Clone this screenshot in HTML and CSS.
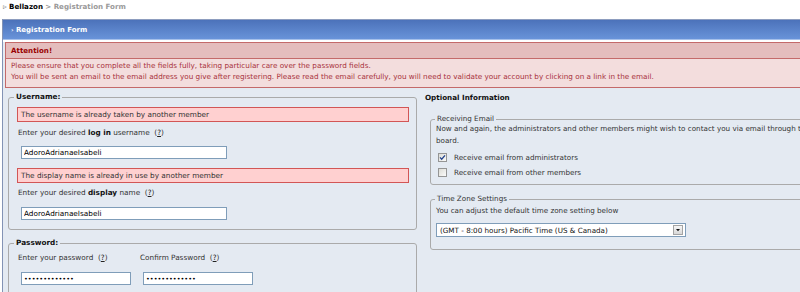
FILE: index.html
```html
<!DOCTYPE html>
<html lang="en">
<head>
  <meta charset="UTF-8" />
  <title>Registration Form</title>
  <link rel="stylesheet" href="styles.css">
</head>
<body>
  <div class="navstrip">
    <span class="nav-arrow">&#9657;</span>
    <b class="nav-home">Bellazon</b>
    <b class="nav-here">&gt; Registration Form</b>
  </div>

  <div class="borderwrap">
    <div class="maintitle"><span class="title-arrow">&rsaquo;</span> Registration Form</div>

    <div class="attention">
      <h4>Attention!</h4>
      <p>Please ensure that you complete all the fields fully, taking particular care over the password fields.<br>You will be sent an email to the email address you give after registering. Please read the email carefully, you will need to validate your account by clicking on a link in the email.</p>
    </div>

    <div class="cols">
      <div class="col-left">
        <fieldset class="box">
          <legend>Username:</legend>
          <div class="error">The username is already taken by another member</div>
          <label class="field-label">Enter your desired <b>log in</b> username&nbsp; (<a href="#">?</a>)</label>
          <input type="text" class="field" value="AdoroAdrianaeIsabeli">
          <div class="error error-next">The display name is already in use by another member</div>
          <label class="field-label label-next">Enter your desired <b>display</b> name&nbsp; (<a href="#">?</a>)</label>
          <input type="text" class="field" value="AdoroAdrianaeIsabeli">
        </fieldset>

        <fieldset class="box box-next">
          <legend>Password:</legend>
          <div class="pw-row">
            <div class="pw-col">
              <label class="field-label pw-label">Enter your password&nbsp; (<a href="#">?</a>)</label>
              <input type="password" class="field pw-field" value="abcdefghijklm">
            </div>
            <div class="pw-col">
              <label class="field-label pw-label">Confirm Password&nbsp; (<a href="#">?</a>)</label>
              <input type="password" class="field pw-field" value="abcdefghijklm">
            </div>
          </div>
        </fieldset>
      </div>

      <div class="col-right">
        <div class="opt-title">Optional Information</div>

        <fieldset class="sub">
          <legend>Receiving Email</legend>
          <p>Now and again, the administrators and other members might wish to contact you via email through the<br>board.</p>
          <label class="check check-first">
            <span class="checkbox"><svg width="7" height="7" viewBox="0 0 7 7"><path d="M1 3.4 L2.7 5.2 L6 1.4" fill="none" stroke="#23438c" stroke-width="1.3"/></svg></span>
            Receive email from administrators
          </label>
          <label class="check">
            <span class="checkbox"></span>
            Receive email from other members
          </label>
        </fieldset>

        <fieldset class="sub sub-next">
          <legend>Time Zone Settings</legend>
          <p class="tz-text">You can adjust the default time zone setting below</p>
          <div class="select">
            <span>(GMT - 8:00 hours) Pacific Time (US &amp; Canada)</span>
            <span class="select-btn"><svg width="8" height="8" viewBox="0 0 8 8"><path d="M2 3 H6 L4 5.2 Z" fill="#111"/></svg></span>
          </div>
        </fieldset>
      </div>
    </div>
  </div>
</body>
</html>
```

FILE: styles.css
```css
html, body {
  overflow: hidden;
}
body {
  margin: 0;
  background-color: #fff;
  color: #222;
  font-family: "DejaVu Sans", Verdana, sans-serif;
  font-size: 7.3px;
}
a {
  color: #222;
  text-decoration: underline;
}

/* breadcrumb */
.navstrip {
  height: 19px;
  line-height: 14px;
  padding-left: 3px;
  white-space: nowrap;
  font-size: 7.1px;
}
.nav-arrow {
  color: #777;
  font-size: 7.5px;
}
.nav-home {
  color: #000;
}
.nav-here {
  color: #999;
}

/* page frame */
.borderwrap {
  width: 1000px;
  min-height: 280px;
  margin-left: 2px;
  border-left: 1px solid #8393b5;
  background-color: #e4eaf2;
}
.maintitle {
  height: 19px;
  line-height: 19px;
  padding-left: 8px;
  border-top: 1px solid #8d9dbf;
  border-bottom: 1px solid #a6c0ea;
  background: linear-gradient(#4c72ba, #6893d9);
  box-shadow: 0 2px 0 #fff;
  color: #fff;
  font-weight: bold;
  font-size: 7px;
}
.title-arrow {
  font-size: 6px;
}

/* attention box */
.attention {
  margin: 2px 0 0 2px;
  border: 1px solid #c46a6a;
  background-color: #f3dddd;
}
.attention h4 {
  margin: 0;
  height: 15px;
  line-height: 15px;
  padding-left: 5px;
  background-color: #e4bdbd;
  border-bottom: 1px solid #c46a6a;
  color: #900;
  font-size: 7.1px;
}
.attention p {
  margin: 0;
  padding: 1px 5px 5px 5px;
  line-height: 11px;
  font-size: 7.25px;
  color: #a8323c;
}

/* columns */
.cols {
  display: grid;
  grid-template-columns: 409px 1fr;
  column-gap: 8px;
  margin-top: 4px;
  padding-left: 5px;
}
fieldset {
  margin: 0;
  min-width: 0;
}
.box {
  border: 1px solid #aaa;
  border-radius: 3px;
  padding: 5px 7px 9px 8px;
}
.box legend {
  padding: 0 2px;
  margin-left: -3px;
  line-height: 10px;
  font-weight: bold;
  color: #111;
}
.box-next {
  margin-top: 8px;
  padding-bottom: 20px;
}
.error {
  height: 15px;
  box-sizing: border-box;
  line-height: 13px;
  padding: 0 4px 0 3px;
  border: 1px solid #d25656;
  background-color: #ffd0d0;
  color: #333;
}
.error-next {
  margin-top: 9px;
}
.field-label {
  display: block;
  margin-top: 6px;
  padding-left: 1px;
  line-height: 10px;
  color: #333;
}
.field-label b {
  color: #111;
}
.label-next {
  margin-top: 5px;
}
.field {
  display: block;
  box-sizing: border-box;
  width: 206px;
  height: 13px;
  margin: 8px 0 0 4px;
  padding: 0 2px;
  border: 1px solid #7f9db9;
  background-color: #fff;
  color: #000;
  font-family: inherit;
  font-size: 7.3px;
  outline: none;
}
.label-next + .field {
  margin-top: 9px;
}
.pw-row {
  display: flex;
}
.pw-col {
  width: 122px;
}
.pw-label {
  margin-top: 0;
}
.pw-field {
  width: 110px;
  margin-top: 9px;
  font-size: 6.5px;
}

/* right side */
.col-right {
  font-size: 7.2px;
}
.opt-title {
  margin-top: 1px;
  line-height: 10px;
  font-weight: bold;
  color: #111;
}
.sub {
  margin: 11px 0 0 5px;
  border: 1px solid #aaa;
  border-radius: 3px;
  padding: 0 6px 4px 5px;
}
.sub legend {
  padding: 0 2px;
  margin-left: -1px;
  line-height: 10px;
  color: #333;
}
.sub p {
  margin: -1px 0 0 0;
  line-height: 12px;
  color: #333;
}
.sub-next {
  margin-top: 9px;
  padding-bottom: 12px;
}
.sub .tz-text {
  margin-top: 1px;
}
.check {
  display: flex;
  align-items: center;
  height: 15px;
  padding-left: 2px;
  color: #333;
}
.check-first {
  margin-top: 3px;
}
.checkbox {
  display: flex;
  align-items: center;
  justify-content: center;
  width: 9px;
  height: 9px;
  box-sizing: border-box;
  margin-right: 7px;
  border: 1px solid #959595;
  background: linear-gradient(135deg, #dcdcd6, #fbfbfb);
}
.select {
  display: flex;
  align-items: center;
  box-sizing: border-box;
  width: 250px;
  height: 14px;
  margin-top: 6px;
  padding-left: 3px;
  border: 1px solid #7f9db9;
  background-color: #fff;
  color: #111;
}
.select-btn {
  display: flex;
  align-items: center;
  justify-content: center;
  box-sizing: border-box;
  width: 10px;
  height: 10px;
  margin-left: auto;
  margin-right: 2px;
  border: 1px solid #a4a4a4;
  background: linear-gradient(#f6f6f6, #d8d8d8);
}
```
